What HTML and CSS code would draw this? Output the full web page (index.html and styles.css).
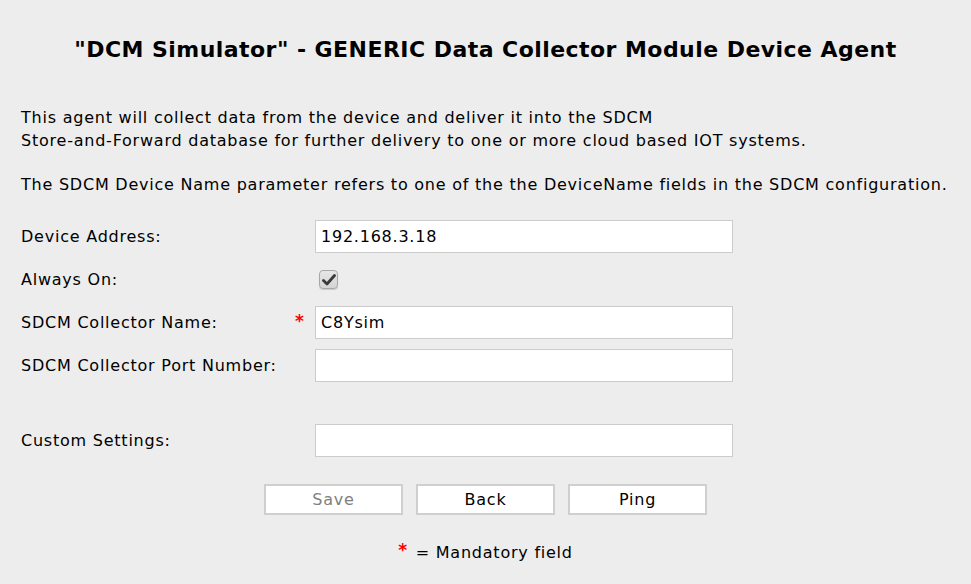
FILE: index.html
```html
<!DOCTYPE html>
<html>
<head>
<meta charset="utf-8">
<link rel="stylesheet" href="styles.css">
</head>
<body>
<div class="page">
  <h1 class="title">"DCM Simulator" - GENERIC Data Collector Module Device Agent</h1>
  <p class="intro">This agent will collect data from the device and deliver it into the SDCM<br>Store-and-Forward database for further delivery to one or more cloud based IOT systems.</p>
  <p class="intro">The SDCM Device Name parameter refers to one of the the DeviceName fields in the SDCM configuration.</p>
  <div class="form">
    <div class="label">Device Address:</div>
    <div class="req"></div>
    <div class="field"><input class="text" type="text" value="192.168.3.18"></div>

    <div class="label">Always On:</div>
    <div class="req"></div>
    <div class="field"><span class="check"><svg width="14" height="12" viewBox="0 0 14 12"><path d="M1.5 6.5 L5 10 L12.5 1.5" fill="none" stroke="#3a3a3a" stroke-width="2.8" stroke-linecap="round" stroke-linejoin="round"/></svg></span></div>

    <div class="label">SDCM Collector Name:</div>
    <div class="req"><span class="star">*</span></div>
    <div class="field"><input class="text" type="text" value="C8Ysim"></div>

    <div class="label">SDCM Collector Port Number:</div>
    <div class="req"></div>
    <div class="field"><input class="text" type="text" value=""></div>

    <div class="spacer"></div>

    <div class="label">Custom Settings:</div>
    <div class="req"></div>
    <div class="field"><input class="text" type="text" value=""></div>
  </div>
  <div class="buttons">
    <button class="btn disabled">Save</button>
    <button class="btn">Back</button>
    <button class="btn">Ping</button>
  </div>
  <p class="legend"><span class="star">*</span> = Mandatory field</p>
</div>
</body>
</html>
```

FILE: styles.css
```css
html, body {
  margin: 0;
  padding: 0;
  background: #ededed;
}
body {
  font-family: "DejaVu Sans", Verdana, sans-serif;
  color: #000;
  font-size: 16px;
  letter-spacing: 0.77px;
}
.page {
  padding: 0 21px;
}
.title {
  margin: 0;
  padding-top: 37px;
  font-size: 22px;
  letter-spacing: 0.45px;
  line-height: 26px;
  text-align: center;
  font-weight: bold;
}
.intro {
  margin: 0;
  line-height: 23px;
}
.title + .intro {
  margin-top: 43px;
}
.intro + .intro {
  margin-top: 21px;
}
.form {
  margin-top: 19px;
  display: grid;
  grid-template-columns: 272px 22px 418px;
  grid-template-rows: 43px 43px 43px 43px 32px 43px;
  align-items: center;
}
.spacer {
  grid-column: 1 / -1;
}
.field {
  display: flex;
  align-items: center;
}
.text {
  box-sizing: border-box;
  width: 418px;
  height: 33px;
  margin: 0;
  border: 1px solid #cccccc;
  background: #fff;
  padding: 0 5px;
  font-family: "DejaVu Sans", Verdana, sans-serif;
  font-size: 16px;
  letter-spacing: 0.77px;
  color: #000;
  outline: none;
}
.check {
  margin-left: 4px;
  box-sizing: border-box;
  width: 19px;
  height: 19px;
  border: 1px solid #a8a8a8;
  border-radius: 4px;
  background: linear-gradient(#e6e6e6, #d4d4d4);
  display: flex;
  align-items: center;
  justify-content: center;
  box-shadow: 0 1px 1px rgba(0,0,0,0.15);
}
.star {
  color: #ff0000;
  font-size: 17px;
  font-weight: bold;
  position: relative;
  top: -2px;
}
.req .star {
  margin-left: 2px;
}
.buttons {
  margin-top: 22px;
  display: flex;
  justify-content: center;
  gap: 13px;
}
.btn {
  box-sizing: border-box;
  width: 139px;
  height: 31px;
  margin: 0;
  background: #fff;
  border: 2px solid #cfcfcf;
  font-family: "DejaVu Sans", Verdana, sans-serif;
  font-size: 16px;
  letter-spacing: 0.77px;
  color: #000;
  padding: 0;
}
.btn.disabled {
  color: #808080;
}
.legend {
  margin: 27px 0 0;
  text-align: center;
  line-height: 20px;
}
.legend .star {
  margin-right: 2px;
}
```
